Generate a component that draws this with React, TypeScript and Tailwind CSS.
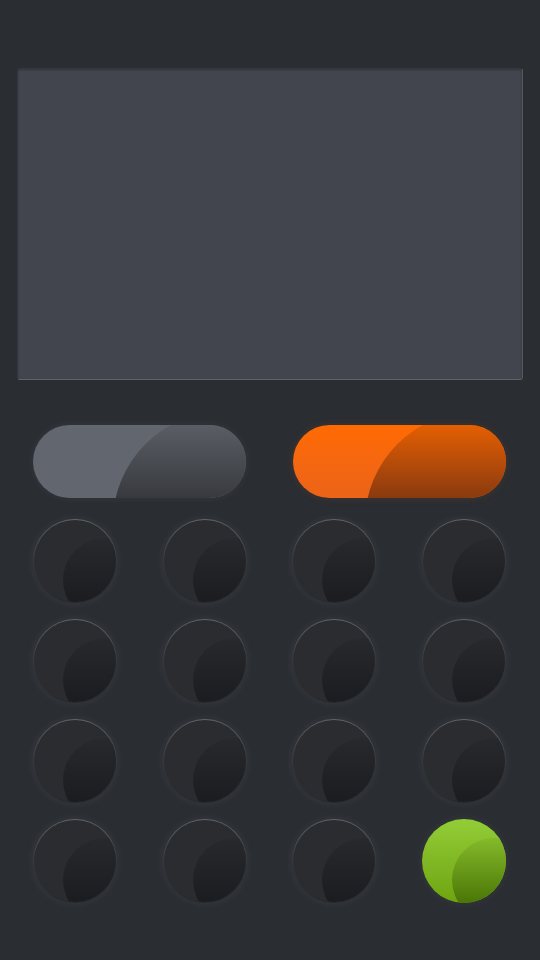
import React from "react";

function Key({ green = false }: { green?: boolean }) {
  if (green) {
    return (
      <div className="relative h-[84px] w-[84px] rounded-full overflow-hidden bg-gradient-to-b from-[#93cd36] to-[#6ea40e] shadow-[0_0_10px_rgba(255,255,255,0.06)]">
        <div className="absolute left-[30px] top-[19px] h-[84px] w-[84px] rounded-full bg-[linear-gradient(to_bottom,#84ba2a_0%,#4a7506_78%)]" />
      </div>
    );
  }
  return (
    <div className="relative h-[84px] w-[84px] rounded-full p-px bg-gradient-to-b from-[#62656a] via-[#36393e] to-[#27292d] shadow-[0_0_10px_rgba(255,255,255,0.07)]">
      <div className="relative h-full w-full rounded-full overflow-hidden bg-[#2a2c30]">
        <div className="absolute left-[29px] top-[18px] h-[84px] w-[84px] rounded-full bg-[linear-gradient(to_bottom,#27292c_0%,#1b1c1f_78%)]" />
      </div>
    </div>
  );
}

export default function App() {
  return (
    <div className="w-full h-[960px] bg-[#2a2d32] flex flex-col px-[17px] pt-[68px]">
      <div className="h-[312px] w-full rounded-[3px] bg-[#42454d] border border-[#34373d] border-b-[#5f6267] border-r-[#55585d] shadow-[inset_0_1px_2px_rgba(0,0,0,0.25)]" />
      <div className="mt-[45px] pl-[16px] pr-[17px] flex justify-between">
        <div className="relative h-[73px] w-[213px] rounded-full overflow-hidden bg-[#62666e] shadow-[0_0_8px_rgba(255,255,255,0.06)]">
          <div className="absolute left-[80px] top-[-13px] h-[220px] w-[220px] rounded-full bg-[linear-gradient(to_bottom,#5a5d64_6%,#383a3f_39%)]" />
        </div>
        <div className="relative h-[73px] w-[213px] rounded-full overflow-hidden bg-gradient-to-b from-[#ff6a02] to-[#ec6418] shadow-[0_0_8px_rgba(255,120,0,0.12)]">
          <div className="absolute left-[72px] top-[-13px] h-[220px] w-[220px] rounded-full bg-[linear-gradient(to_bottom,#e45f02_6%,#8a3a0f_39%)]" />
        </div>
      </div>
      <div className="mt-[21px] pl-[16px] pr-[17px] grid grid-cols-[84px_84px_84px_84px] justify-between gap-y-[16px]">
        {Array.from({ length: 15 }).map((_, i) => (
          <Key key={i} />
        ))}
        <Key green />
      </div>
    </div>
  );
}
